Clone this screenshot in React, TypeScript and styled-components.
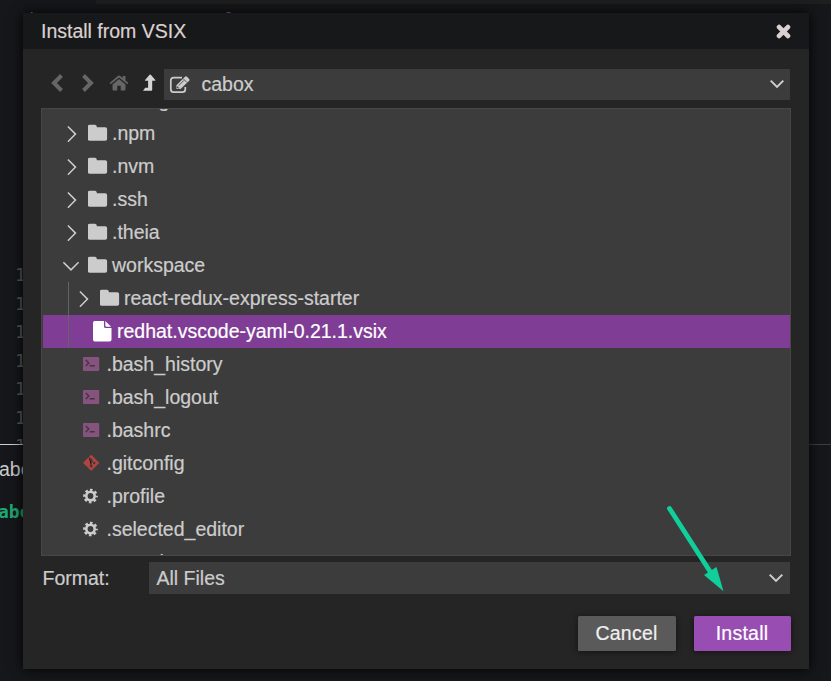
import React from "react";
import styled, { createGlobalStyle } from "styled-components";

const GlobalStyle = createGlobalStyle`
  * { box-sizing: border-box; }
  body { margin: 0; background: #151719; overflow: hidden; }
`;

const Workbench = styled.div`
  position: relative;
  width: 831px;
  height: 681px;
  overflow: hidden;
  display: flex;
  flex-direction: column;
  background: #16171a;
  color: #ccc;
  font: 19.5px/33px "Liberation Sans", Arial, sans-serif;
`;

const EditorTabs = styled.div`
  flex: 0 0 4px;
  margin-left: 96px;
  background: #1e1e1e;
`;

const Editor = styled.div`
  flex: 0 0 440px;
  overflow: hidden;
  display: flex;
  flex-direction: column;
`;

const ImportLine = styled.div`
  flex: 0 0 257px;
  padding: 4px 0 0 26px;
  font: 18px/24px "DejaVu Sans Mono", monospace;
  white-space: pre;
  color: #5aa8c0;
  span { color: #b0609a; }
  em { color: #a06040; font-style: normal; }
`;

const LineNumber = styled.div`
  flex: 0 0 28.5px;
  padding-left: 15px;
  color: #5a5e63;
  font: 18px/28.5px "DejaVu Sans Mono", monospace;
`;

const Terminal = styled.div`
  flex: 1;
  border-top: 1px solid #55575a;
  border-image: linear-gradient(90deg, #d0d0d0 0 30px, #3c3f42 30px) 1;
  padding-top: 8px;
`;

const TerminalTab = styled.div`
  height: 33px;
  margin-left: -1px;
  color: #ccc;
`;

const Prompt = styled.div`
  margin-top: 9px;
  margin-left: -2px;
  color: #1fa873;
  font: bold 18px/34px "DejaVu Sans Mono", monospace;
`;

const Overlay = styled.div`
  position: absolute;
  inset: 0;
  padding: 13px 22px 12px 23px;
`;

const Dialog = styled.div`
  display: flex;
  flex-direction: column;
  height: 656px;
  background: #252525;
  box-shadow: 0 0 12px rgba(0, 0, 0, 0.9);
`;

const TitleBar = styled.div`
  flex: 0 0 36px;
  display: flex;
  align-items: center;
  justify-content: space-between;
  padding: 0 18px;
  background: #16181a;
  color: #dbd0d0;
  -webkit-text-stroke: 0.2px;
  svg { display: block; }
`;

const Content = styled.div`
  flex: 1;
  display: flex;
  flex-direction: column;
  padding: 20px 18px 18px;
  -webkit-text-stroke: 0.2px;
`;

const NavBar = styled.div`
  display: flex;
  height: 31px;
  margin-right: 1px;
`;

const NavButton = styled.div<{ $width: number; $active?: boolean }>`
  flex: 0 0 ${(p) => p.$width}px;
  display: flex;
  align-items: center;
  justify-content: center;
  padding-bottom: 3px;
  color: ${(p) => (p.$active ? "#d4d4d4" : "#666")};
`;

const Select = styled.div<{ $gap?: number }>`
  flex: 1;
  display: flex;
  align-items: center;
  background: #3c3c3c;
  padding: 0 ${(p) => (p.$gap ? 6 : 5)}px 0 ${(p) => p.$gap ?? 5}px;
  svg { flex: none; }
  svg:last-child { margin-left: auto; margin-bottom: 1px; }
`;

const LocationName = styled.span`
  margin-left: 10.5px;
`;

const Tree = styled.div`
  height: 448px;
  margin-top: 8px;
  overflow: hidden;
  display: flex;
  flex-direction: column;
  border: 1px solid #474747;
  background: #3c3c3c;
`;

const TreeRow = styled.div<{ $indent: number; $selected?: boolean; $first?: boolean; $guide?: boolean }>`
  position: relative;
  flex: 0 0 33px;
  display: flex;
  align-items: center;
  margin-top: ${(p) => (p.$first ? -25 : 0)}px;
  margin-left: 1px;
  padding-left: ${(p) => p.$indent}px;
  white-space: pre;
  color: ${(p) => (p.$selected ? "#fff" : "#ccc")};
  background: ${(p) => (p.$selected ? "#803d96" : "transparent")};
  &::before {
    content: "";
    display: ${(p) => (p.$guide ? "block" : "none")};
    position: absolute;
    left: 25px;
    top: 0;
    bottom: 0;
    width: 1px;
    background: #646464;
  }
`;

const IconCell = styled.span<{ $width: number }>`
  flex: 0 0 ${(p) => p.$width}px;
  display: flex;
  align-items: center;
  padding-bottom: 2px;
`;

const FormatRow = styled.div`
  display: flex;
  height: 32px;
  margin: 6px 1px 0 0;
  line-height: 32px;
`;

const FormatLabel = styled.div`
  flex: 0 0 108px;
  padding-left: 1.5px;
`;

const Actions = styled.div`
  display: flex;
  justify-content: flex-end;
  gap: 18px;
  margin-top: 22px;
`;

const Button = styled.button<{ $primary?: boolean }>`
  width: ${(p) => (p.$primary ? 97 : 98)}px;
  height: 35px;
  padding: 0 1px 0 0;
  border: 0;
  border-radius: 1.5px;
  font: 19.5px/33px "Liberation Sans", Arial, sans-serif;
  letter-spacing: 0.25px;
  -webkit-text-stroke: 0.2px;
  color: ${(p) => (p.$primary ? "#fff" : "#f0f0f0")};
  background: ${(p) => (p.$primary ? "#984db3" : "#5a5a5a")};
  box-shadow: 0 1px 6px rgba(0, 0, 0, 0.5);
`;

const Pointer = styled.svg`
  position: absolute;
  left: 660px;
  top: 500px;
`;

const CloseIcon = () => (
  <svg width="15" height="15" viewBox="0 0 15 15">
    <path d="M3.1 3.1L11.9 11.9M11.9 3.1L3.1 11.9" stroke="currentColor" strokeWidth="4.8" strokeLinecap="round" />
  </svg>
);

const ChevronIcon = ({ right }: { right?: boolean }) => (
  <svg width="14" height="20" viewBox="0 0 14 20">
    <path d={right ? "M2.5 2.5L10 10L2.5 17.5" : "M11.5 2.5L4 10L11.5 17.5"} fill="none" stroke="currentColor" strokeWidth="4" />
  </svg>
);

const HomeIcon = () => (
  <svg width="20" height="16" viewBox="0 0 20 16" fill="currentColor">
    <path d="M10 4L16.5 9.4V14.4Q16.5 15.5 15.4 15.5H11.7V10.8H8.3V15.5H4.6Q3.5 15.5 3.5 14.4V9.4Z" />
    <path d="M.6 8L8.8 1Q10 .1 11.2 1L13.7 3.1V1H16.5V5.5L19.4 8L18.4 9.3L10 2.6L1.6 9.3Z" />
  </svg>
);

const UpIcon = () => (
  <svg width="14" height="18" viewBox="0 0 14 18">
    <path d="M1 16.8L3.2 13.7H6.1V6.8H3.4Q2.5 6.8 3.1 6L7.6 .8Q8.2 .3 8.8 .8L13.3 6Q13.8 6.8 13 6.8H10.2V16Q10.2 16.8 9.4 16.8Z" fill="currentColor" />
  </svg>
);

const EditIcon = () => (
  <svg width="22" height="20" viewBox="0 0 22 20" fill="none" stroke="#ccc" strokeWidth="1.7">
    <path d="M13 2.7H4.8Q1.8 2.7 1.8 5.7V14.2Q1.8 17.2 4.8 17.2H13.3Q16.3 17.2 16.3 14.2V12" />
    <path d="M7.5 14V10.3L16 1.8Q17 .9 18 1.8L20.2 4Q21 5 20.2 5.8L11.5 14Z" fill="#ccc" stroke="none" />
    <path d="M14.2 3.7L18.1 7.6M9.8 10.5L15 5.3" stroke="#3c3c3c" strokeWidth=".8" />
    <path d="M8.6 11.4V13H10.3" stroke="#3c3c3c" strokeWidth=".9" />
  </svg>
);

const SelectArrow = () => (
  <svg width="16" height="10" viewBox="0 0 16 10">
    <path d="M1.7 1.7L8 8L14.3 1.7" fill="none" stroke="#d0d0d0" strokeWidth="1.9" />
  </svg>
);

const Expander = ({ open }: { open?: boolean }) => (
  <svg width="25" height="18" viewBox="0 0 25 18">
    <path d={open ? "M.4 6.3L8 13.9L15.6 6.3" : "M4.9 2.5L12.5 10.1L4.9 17.7"} fill="none" stroke="#ccc" strokeWidth="1.5" />
  </svg>
);

const FolderIcon = () => (
  <svg width="20" height="18" viewBox="0 0 20 18">
    <path d="M1.8 .8H7Q8.5 .8 8.8 2.4V3.2H17.3Q19.1 3.2 19.1 5V15Q19.1 16.8 17.3 16.8H1.8Q-.3 16.8 -.3 15V2.8Q-.3 .8 1.8 .8Z" fill="#ccc" />
  </svg>
);

const FileIcon = () => (
  <svg width="20" height="22" viewBox="0 0 20 22">
    <path d="M1.8 .9H11V6.4Q11 8 12.8 8H18.5V19.5Q18.5 21.4 16.7 21.4H1.8Q0 21.4 0 19.5V2.7Q0 .9 1.8 .9Z M12.3 .9L18.2 6.7H13.5Q12.3 6.7 12.3 5.4Z" fill="#fff" />
  </svg>
);

const ShellIcon = () => (
  <svg width="17" height="14" viewBox="0 0 17 14">
    <rect width="16.2" height="14" rx=".7" fill="#86527e" />
    <path d="M2.8 3L5.8 6L2.8 9M6.7 8.8H11.7" fill="none" stroke="#41363f" strokeWidth="1.4" />
  </svg>
);

const GitIcon = () => (
  <svg width="17" height="18" viewBox="0 0 17 18">
    <rect x="2.4" y="3" width="11.6" height="11.6" rx=".9" transform="rotate(45 8.2 8.8)" fill="#b04440" />
    <path d="M6 3.4L8.2 5.8V12.5M8.2 6L11 9" stroke="#40383a" strokeWidth="1" />
    <g fill="#40383a"><circle cx="8.2" cy="5.9" r="1.3" /><circle cx="8.2" cy="12.3" r="1.3" /><circle cx="11.2" cy="9" r="1.2" /></g>
  </svg>
);

const GearIcon = () => (
  <svg width="16" height="16" viewBox="0 0 16 16" fill="none" stroke="#ccc">
    <circle cx="7.5" cy="8" r="4.2" strokeWidth="2.6" />
    <circle cx="7.5" cy="8" r="6.1" strokeWidth="2.5" strokeDasharray="2.6 2.191" strokeDashoffset="1.3" />
  </svg>
);

const fileIcons = { shell: ShellIcon, git: GitIcon, gear: GearIcon };

const Folder = ({ name, open, nested, first }: { name: string; open?: boolean; nested?: boolean; first?: boolean }) => (
  <TreeRow $indent={nested ? 32 : 20} $guide={nested} $first={first}>
    <IconCell $width={25}><Expander open={open} /></IconCell>
    <IconCell $width={24}><FolderIcon /></IconCell>
    {name}
  </TreeRow>
);

const File = ({ name, icon }: { name: string; icon?: keyof typeof fileIcons }) => {
  const Icon = icon && fileIcons[icon];
  return (
    <TreeRow $indent={40}>
      <IconCell $width={23.5}>{Icon && <Icon />}</IconCell>
      {name}
    </TreeRow>
  );
};

export default function App() {
  return (
    <>
      <GlobalStyle />
      <Workbench>
        <EditorTabs />
        <Editor>
          <ImportLine><span>import</span> * <em>as</em> React <span>from</span> <em>'react'</em></ImportLine>
          {Array.from({ length: 7 }, (_, i) => <LineNumber key={i}>{10 + i}</LineNumber>)}
        </Editor>
        <Terminal>
          <TerminalTab>abox</TerminalTab>
          <Prompt>abox</Prompt>
        </Terminal>
        <Overlay>
          <Dialog>
            <TitleBar>Install from VSIX<CloseIcon /></TitleBar>
            <Content>
              <NavBar>
                <NavButton $width={32}><ChevronIcon /></NavButton>
                <NavButton $width={30}><ChevronIcon right /></NavButton>
                <NavButton $width={31}><HomeIcon /></NavButton>
                <NavButton $width={30} $active><UpIcon /></NavButton>
                <Select><EditIcon /><LocationName>cabox</LocationName><SelectArrow /></Select>
              </NavBar>
              <Tree>
                <Folder name=".config" first />
                <Folder name=".npm" />
                <Folder name=".nvm" />
                <Folder name=".ssh" />
                <Folder name=".theia" />
                <Folder name="workspace" open />
                <Folder name="react-redux-express-starter" nested />
                <TreeRow $indent={50} $selected $guide>
                  <IconCell $width={24}><FileIcon /></IconCell>
                  redhat.vscode-yaml-0.21.1.vsix
                </TreeRow>
                <File name=".bash_history" icon="shell" />
                <File name=".bash_logout" icon="shell" />
                <File name=".bashrc" icon="shell" />
                <File name=".gitconfig" icon="git" />
                <File name=".profile" icon="gear" />
                <File name=".selected_editor" icon="gear" />
                <File name=".wget-hsts" />
              </Tree>
              <FormatRow>
                <FormatLabel>Format:</FormatLabel>
                <Select $gap={7.5}>All Files<SelectArrow /></Select>
              </FormatRow>
              <Actions>
                <Button>Cancel</Button>
                <Button $primary>Install</Button>
              </Actions>
            </Content>
          </Dialog>
        </Overlay>
        <Pointer width="70" height="95" viewBox="0 0 70 95">
          <path d="M9.5 8.5L51 73" stroke="#10cf9b" strokeWidth="4.8" strokeLinecap="round" />
          <path d="M44 75L56.5 67L63.5 91.3Z" fill="#10cf9b" />
        </Pointer>
      </Workbench>
    </>
  );
}
